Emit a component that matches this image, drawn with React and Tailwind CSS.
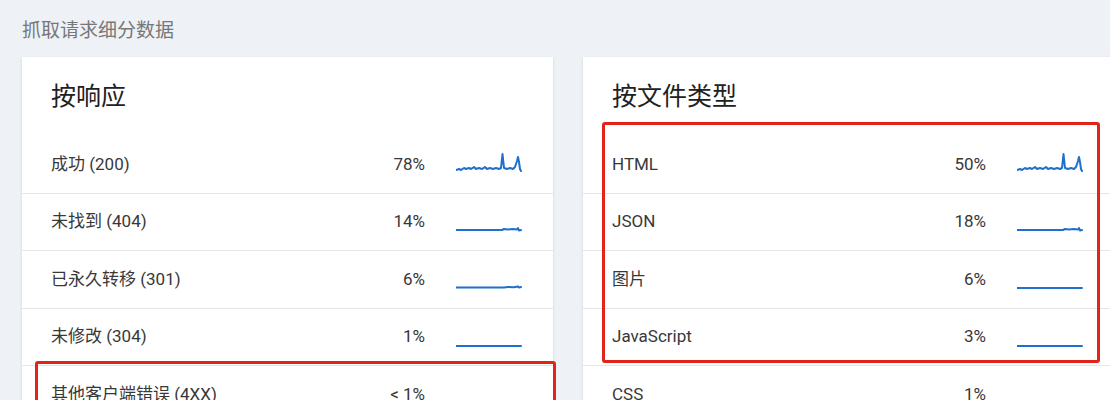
import React from 'react';

const spark = {
  peak: 'M0,18 L3,17 L5,18 L8,16 L10,17 L13,16 L15,17 L18,15 L20,17 L23,16 L26,17 L29,15 L31,17 L34,16 L37,17 L40,16 L43,17 L45,16 L46.5,2 L48,16 L51,17 L54,16 L57,17 L59,15 L61,9 L62,5 L63,10 L64,17 L65,19',
  bump: 'M0,20 L30,20 L46,20 L48,19 L52,19.5 L57,19 L61,19.5 L62,18 L63,20.5 L65,20',
  small: 'M0,20.5 L48,20.5 L52,20 L58,20.3 L62,19.5 L63,20.5 L65,20',
  flat: 'M0,21 L65,21',
};

const byResponse = [
  { label: '成功 (200)', pct: '78%', line: spark.peak },
  { label: '未找到 (404)', pct: '14%', line: spark.bump },
  { label: '已永久转移 (301)', pct: '6%', line: spark.small },
  { label: '未修改 (304)', pct: '1%', line: spark.flat },
  { label: '其他客户端错误 (4XX)', pct: '< 1%', line: spark.flat, faint: true },
];

const byType = [
  { label: 'HTML', pct: '50%', line: spark.peak },
  { label: 'JSON', pct: '18%', line: spark.bump },
  { label: '图片', pct: '6%', line: spark.flat },
  { label: 'JavaScript', pct: '3%', line: spark.flat },
  { label: 'CSS', pct: '1%', line: spark.flat, faint: true },
];

const Sparkline = ({ d, faint }) => (
  <svg width="66" height="24" viewBox="0 0 66 24" className="shrink-0">
    <path d={d} fill="none" stroke={faint ? '#5b9be0' : '#1f6fcc'} strokeWidth="2" strokeLinejoin="round" strokeLinecap="round" />
  </svg>
);

const Card = ({ title, rows }) => (
  <div className="w-[531px] shrink-0 bg-white shadow-[0_1px_3px_rgba(0,0,0,0.12)]">
    <h2 className="pl-[29px] pt-[22px] pb-[21px] text-[25px] leading-[36px] text-[#212121]">{title}</h2>
    {rows.map((r) => (
      <div key={r.label} className="flex items-center h-[57.5px] border-b border-[#e6e6e6] pl-[29px] pr-[31px]">
        <span className="flex-1 text-[17px] text-[#383838]">{r.label}</span>
        <span className="w-[80px] text-right text-[17px] text-[#383838] mr-[31px]">{r.pct}</span>
        <Sparkline d={r.line} faint={r.faint} />
      </div>
    ))}
  </div>
);

export default function App() {
  return (
    <div
      className="relative h-[400px] overflow-hidden bg-[#eef1f6] pl-[22px] pt-[18px]"
      style={{ fontFamily: 'Roboto, "Noto Sans CJK SC", sans-serif' }}
    >
      <div className="text-[19px] leading-[26px] text-[#777]">抓取请求细分数据</div>
      <div className="flex gap-[30px] mt-[13px]">
        <Card title="按响应" rows={byResponse} />
        <Card title="按文件类型" rows={byType} />
      </div>
      {/* red annotation boxes */}
      <div className="absolute left-[602px] top-[122px] w-[498px] h-[241px] border-[3px] border-[#e2231a] rounded-[3px]" />
      <div className="absolute left-[35px] top-[361px] w-[521px] h-[60px] border-[3px] border-[#e2231a] rounded-[3px]" />
    </div>
  );
}
